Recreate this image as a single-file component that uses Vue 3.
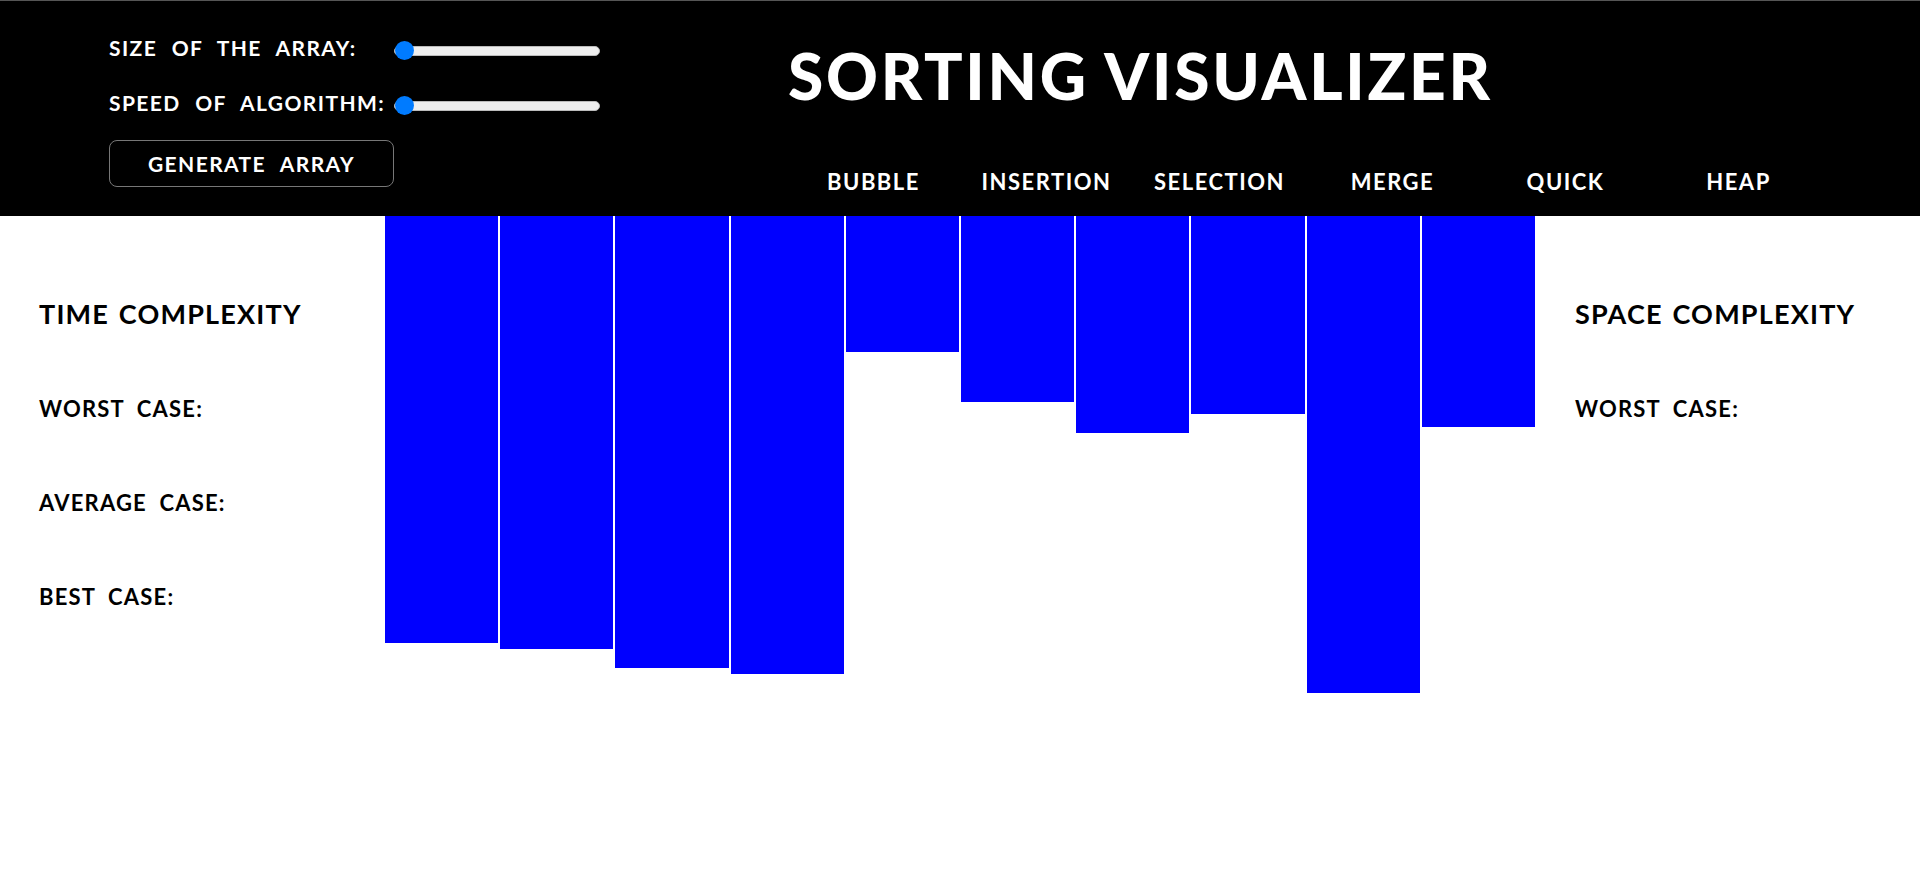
<script setup>
const sizes = [427, 433, 452, 458, 136, 186, 217, 198, 477, 211]
const sorts = ['BUBBLE', 'INSERTION', 'SELECTION', 'MERGE', 'QUICK', 'HEAP']
</script>

<template>
  <div class="page">
    <header class="head">
      <div class="controls">
        <div class="row">
          <label class="lab">SIZE OF THE ARRAY:</label>
          <input class="slider" type="range" min="0" max="100" value="0" />
        </div>
        <div class="row">
          <label class="lab">SPEED OF ALGORITHM:</label>
          <input class="slider" type="range" min="0" max="100" value="0" />
        </div>
        <button class="gen">GENERATE ARRAY</button>
      </div>
      <div class="mid">
        <h1 class="title">SORTING VISUALIZER</h1>
        <nav class="sorts">
          <span v-for="s in sorts" :key="s" class="sort">{{ s }}</span>
        </nav>
      </div>
    </header>
    <main class="body">
      <section class="side left">
        <h2>TIME COMPLEXITY</h2>
        <p>WORST CASE:</p>
        <p>AVERAGE CASE:</p>
        <p>BEST CASE:</p>
      </section>
      <section class="bars">
        <div v-for="(h, i) in sizes" :key="i" class="bar" :style="{ height: h + 'px' }"></div>
      </section>
      <section class="side right">
        <h2>SPACE COMPLEXITY</h2>
        <p>WORST CASE:</p>
      </section>
    </main>
  </div>
</template>

<style scoped>
.page { height: 882px; overflow: hidden; background: #fff; font-family: "Comic Sans MS", "Lato", "DejaVu Sans", sans-serif; }
.head { height: 216px; box-sizing: border-box; background: #000; border-top: 1px solid #555; display: flex; color: #fff; }
.controls { width: 600px; padding: 22px 0 0 109px; box-sizing: border-box; flex: none; }
.row { display: flex; align-items: center; height: 55px; width: 491px; }
.lab { width: 285px; padding-bottom: 6px; font-size: 21px; font-weight: 700; flex: none; color: #fff; white-space: nowrap; letter-spacing: 1.4px; word-spacing: 8px; }
.slider { -webkit-appearance: none; appearance: none; width: 206px; height: 10px; margin: 0; background: #eee; border: 1px solid #bbb; box-sizing: border-box; border-radius: 5px; flex: none; }
.slider::-webkit-slider-thumb { -webkit-appearance: none; width: 19px; height: 19px; border-radius: 50%; background: #007bff; border: 0; }
.gen { display: block; width: 285px; height: 47px; margin-top: 7px; padding: 0; background: transparent; color: #fff; border: 1px solid #777; border-radius: 8px; font: inherit; font-size: 21px; font-weight: 700; letter-spacing: 1.4px; word-spacing: 8px; }
.mid { flex: 1; padding-left: 188px; }
.title { margin: 40px 0 0; font-size: 64px; line-height: 70px; font-weight: 900; letter-spacing: 2.75px; white-space: nowrap; }
.sorts { display: flex; margin-top: 56px; margin-left: -1px; }
.sort { width: 173px; text-align: center; font-size: 22px; font-weight: 700; line-height: 30px; letter-spacing: 1.5px; }
.body { display: flex; }
.side { flex: none; box-sizing: border-box; color: #000; width: 384px; padding: 80px 0 0 39px; }
.side h2 { margin: 0; font-size: 27px; line-height: 36px; font-weight: 700; white-space: nowrap; letter-spacing: 1.2px; word-spacing: 2px; }
.side p { margin: 58px 0 0; font-size: 22px; line-height: 36px; font-weight: 700; white-space: nowrap; letter-spacing: 1.2px; word-spacing: 6px; }
.side h2 + p { margin-top: 59px; }
.bars { width: 1152px; display: flex; align-items: flex-start; flex: none; }
.bar { flex: 1; margin: 0 1px; background: #00f; }
</style>
